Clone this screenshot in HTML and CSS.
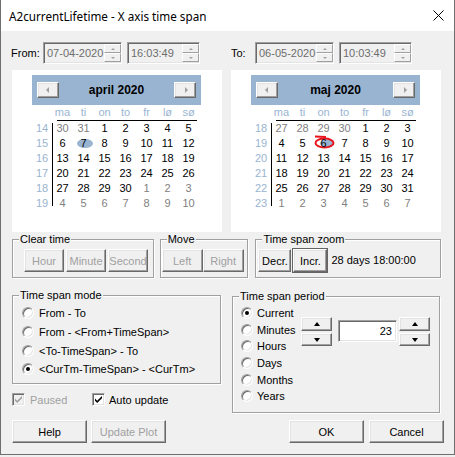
FILE: index.html
```html
<!DOCTYPE html>
<html>
<head>
<meta charset="utf-8">
<title>A2currentLifetime - X axis time span</title>
<link rel="stylesheet" href="styles.css">
</head>
<body>
<div class="window">
  <div class="titlebar">
    <span class="title">A2currentLifetime - X axis time span</span>
    <svg class="close" width="11" height="11" viewBox="0 0 11 11"><path d="M0.5 0.5 L10.5 10.5 M10.5 0.5 L0.5 10.5" stroke="#000" stroke-width="1" fill="none"/></svg>
  </div>
  <div class="content">
    <div class="pair fields">
      <div class="frow">
        <span class="flbl from">From:</span>
        <div class="spinedit date"><span class="val">07-04-2020</span><span class="spin"><span class="sb"><i class="cu"></i></span><span class="sb"><i class="cd"></i></span></span></div>
        <div class="spinedit time"><span class="val">16:03:49</span><span class="spin"><span class="sb"><i class="cu"></i></span><span class="sb"><i class="cd"></i></span></span></div>
      </div>
      <div class="frow">
        <span class="flbl to">To:</span>
        <div class="spinedit date"><span class="val">06-05-2020</span><span class="spin"><span class="sb"><i class="cu"></i></span><span class="sb"><i class="cd"></i></span></span></div>
        <div class="spinedit time"><span class="val">10:03:49</span><span class="spin"><span class="sb"><i class="cu"></i></span><span class="sb"><i class="cd"></i></span></span></div>
      </div>
    </div>

    <div class="pair cals">
      <div class="cal">
        <div class="cal-head">
          <span class="nav"><i class="tl"></i></span>
          <span class="cal-title">april 2020</span>
          <span class="nav"><i class="tr"></i></span>
        </div>
        <div class="dow"><span></span><span>ma</span><span>ti</span><span>on</span><span>to</span><span>fr</span><span>lø</span><span>sø</span></div>
        <div class="dow-line"></div>
        <div class="cal-body">
          <div class="weeks"><span>14</span><span>15</span><span>16</span><span>17</span><span>18</span><span>19</span></div>
          <div class="days">
            <span class="o">30</span><span class="o">31</span><span>1</span><span>2</span><span>3</span><span>4</span><span>5</span>
            <span>6</span><span class="sel"><b>7</b></span><span>8</span><span>9</span><span>10</span><span>11</span><span>12</span>
            <span>13</span><span>14</span><span>15</span><span>16</span><span>17</span><span>18</span><span>19</span>
            <span>20</span><span>21</span><span>22</span><span>23</span><span>24</span><span>25</span><span>26</span>
            <span>27</span><span>28</span><span>29</span><span>30</span><span class="o">1</span><span class="o">2</span><span class="o">3</span>
            <span class="o">4</span><span class="o">5</span><span class="o">6</span><span class="o">7</span><span class="o">8</span><span class="o">9</span><span class="o">10</span>
          </div>
        </div>
      </div>
      <div class="cal">
        <div class="cal-head">
          <span class="nav"><i class="tl"></i></span>
          <span class="cal-title">maj 2020</span>
          <span class="nav"><i class="tr"></i></span>
        </div>
        <div class="dow"><span></span><span>ma</span><span>ti</span><span>on</span><span>to</span><span>fr</span><span>lø</span><span>sø</span></div>
        <div class="dow-line"></div>
        <div class="cal-body">
          <div class="weeks"><span>18</span><span>19</span><span>20</span><span>21</span><span>22</span><span>23</span></div>
          <div class="days">
            <span class="o">27</span><span class="o">28</span><span class="o">29</span><span class="o">30</span><span>1</span><span>2</span><span>3</span>
            <span>4</span><span>5</span><span class="today"><svg class="ring" width="26" height="18" viewBox="0 0 26 18"><ellipse cx="14" cy="9.5" rx="7" ry="4" fill="#99b4d1"/><ellipse cx="11.5" cy="9" rx="9" ry="4.5" fill="none" stroke="#e8141c" stroke-width="2"/><path d="M2 2.6 L13 2.9" stroke="#e8141c" stroke-width="2" fill="none"/></svg><b>6</b></span><span>7</span><span>8</span><span>9</span><span>10</span>
            <span>11</span><span>12</span><span>13</span><span>14</span><span>15</span><span>16</span><span>17</span>
            <span>18</span><span>19</span><span>20</span><span>21</span><span>22</span><span>23</span><span>24</span>
            <span>25</span><span>26</span><span>27</span><span>28</span><span>29</span><span>30</span><span>31</span>
            <span class="o">1</span><span class="o">2</span><span class="o">3</span><span class="o">4</span><span class="o">5</span><span class="o">6</span><span class="o">7</span>
          </div>
        </div>
      </div>
    </div>

    <div class="grow">
      <div class="group g-clear">
        <span class="glabel">Clear time</span>
        <span class="btn dis w40">Hour</span>
        <span class="btn dis w40">Minute</span>
        <span class="btn dis w40">Second</span>
      </div>
      <div class="group g-move">
        <span class="glabel">Move</span>
        <span class="btn dis w41">Left</span>
        <span class="btn dis w41">Right</span>
      </div>
      <div class="group g-zoom">
        <span class="glabel">Time span zoom</span>
        <span class="btn w33">Decr.</span>
        <span class="btn w34 def">Incr.</span>
        <span class="zoomtxt">28 days 18:00:00</span>
      </div>
    </div>

    <div class="bottom">
      <div class="leftcol">
        <div class="group g-mode">
          <span class="glabel">Time span mode</span>
          <div class="rrow"><span class="radio"></span><span>From - To</span></div>
          <div class="rrow"><span class="radio"></span><span>From - &lt;From+TimeSpan&gt;</span></div>
          <div class="rrow"><span class="radio"></span><span>&lt;To-TimeSpan&gt; - To</span></div>
          <div class="rrow"><span class="radio on"></span><span>&lt;CurTm-TimeSpan&gt; - &lt;CurTm&gt;</span></div>
        </div>
        <div class="checks">
          <div class="ckitem paused">
            <span class="chk dis"><svg width="11" height="11" viewBox="0 0 11 11"><path d="M2 4.5 L4.2 6.7 L9 1.9 L9 4.2 L4.2 9 L2 6.8 Z" fill="#a0a0a0"/></svg></span>
            <span class="chklbl dis">Paused</span>
          </div>
          <div class="ckitem">
            <span class="chk"><svg width="11" height="11" viewBox="0 0 11 11"><path d="M2 4.5 L4.2 6.7 L9 1.9 L9 4.2 L4.2 9 L2 6.8 Z" fill="#000"/></svg></span>
            <span class="chklbl auto">Auto update</span>
          </div>
        </div>
      </div>
      <div class="group g-period">
        <span class="glabel">Time span period</span>
        <div class="pradios">
          <div class="prow"><span class="radio on"></span><span>Current</span></div>
          <div class="prow"><span class="radio"></span><span>Minutes</span></div>
          <div class="prow"><span class="radio"></span><span>Hours</span></div>
          <div class="prow"><span class="radio"></span><span>Days</span></div>
          <div class="prow"><span class="radio"></span><span>Months</span></div>
          <div class="prow"><span class="radio"></span><span>Years</span></div>
        </div>
        <div class="pctrls">
          <div class="updn"><span class="btn ub"><i class="au"></i></span><span class="btn db"><i class="ad"></i></span></div>
          <div class="edit">23</div>
          <div class="updn"><span class="btn ub"><i class="au"></i></span><span class="btn db"><i class="ad"></i></span></div>
        </div>
      </div>
    </div>

    <div class="btnrow">
      <span class="btn w75">Help</span>
      <span class="btn dis w75 ml4">Update Plot</span>
      <span class="btn w75 push">OK</span>
      <span class="btn w75 ml5">Cancel</span>
    </div>
  </div>
</div>
</body>
</html>
```
FILE: styles.css
```css
* { box-sizing: border-box; }
html, body { margin: 0; padding: 0; }
body {
  width: 455px;
  height: 457px;
  overflow: hidden;
  background: #f0f0f0;
  font-family: "Liberation Sans", Arial, sans-serif;
  font-size: 11px;
  color: #000;
}
.window {
  width: 455px;
  height: 455px;
  border: 1px solid #6f6f6f;
  border-top: 0;
  background: #f0f0f0;
}
.titlebar {
  height: 31px;
  background: #fff;
  display: flex;
  align-items: center;
  justify-content: space-between;
  padding: 0 10px 0 8px;
}
.title {
  font-family: "Noto Sans", "Liberation Sans", sans-serif;
  font-size: 11.7px;
  color: #000;
}
.close { display: block; }
.content { padding: 11px 13px 0 11px; }

.pair {
  display: grid;
  grid-template-columns: 210px 210px;
  column-gap: 9px;
}
.fields { height: 22px; }
.frow { display: flex; align-items: center; }
.flbl { display: block; }
.flbl.from { width: 32px; margin-left: -1px; }
.flbl.to { width: 24px; }

.spinedit {
  height: 22px;
  display: flex;
  align-items: center;
  border: 1px solid;
  border-color: #a0a0a0 #fff #fff #a0a0a0;
  box-shadow: inset 1px 1px #696969, inset -1px -1px #e3e3e3;
  background: #f0f0f0;
  color: #6d6d6d;
  padding: 1px 0 1px 3px;
}
.spinedit.date { width: 79px; }
.spinedit.time { width: 73px; margin-left: 5px; }
.spinedit .val { flex: 1; }
.spin {
  width: 17px;
  height: 18px;
  display: flex;
  flex-direction: column;
}
.sb {
  flex: 1;
  display: flex;
  align-items: center;
  justify-content: center;
  border: 1px solid;
  border-color: #fff #a0a0a0 #a0a0a0 #fff;
  background: #f0f0f0;
}
.cu, .cd { display: block; width: 0; height: 0; border-left: 2.5px solid transparent; border-right: 2.5px solid transparent; }
.cu { border-bottom: 2px solid #a0a0a0; }
.cd { border-top: 2px solid #a0a0a0; }

/* calendars */
.cals { margin-top: 6px; }
.cal {
  background: #fff;
  height: 162px;
  padding: 5px 0 0 20px;
}
.cal-head {
  width: 169px;
  height: 30px;
  background: #99b4d1;
  display: flex;
  align-items: center;
  justify-content: space-between;
  padding: 0 5px;
}
.nav {
  width: 22px;
  height: 16px;
  display: flex;
  align-items: center;
  justify-content: center;
  background: #f0f0f0;
  border: 1px solid;
  border-color: #fff #696969 #696969 #fff;
  box-shadow: inset -1px -1px #a0a0a0, inset 1px 1px #e3e3e3;
}
.tl, .tr { display: block; width: 0; height: 0; border-top: 3.5px solid transparent; border-bottom: 3.5px solid transparent; }
.tl { border-right: 3.5px solid #a0a0a0; margin-right: 2px; }
.tr { border-left: 3.5px solid #a0a0a0; margin-left: 2px; }
.cal-title { font-weight: bold; font-size: 12px; color: #000; }
.dow {
  display: grid;
  grid-template-columns: 20px repeat(7, 21px);
  height: 15px;
  line-height: 15px;
  text-align: center;
  color: #99b4d1;
}
.dow-line {
  margin-left: 25px;
  width: 140px;
  height: 1px;
  background: #000;
}
.cal-body { display: flex; }
.weeks {
  width: 20px;
  position: relative;
  display: grid;
  grid-auto-rows: 15px;
  line-height: 15px;
  text-align: center;
  color: #99b4d1;
}
.weeks::after {
  content: "";
  position: absolute;
  right: -1px;
  top: 2px;
  bottom: 5px;
  width: 1px;
  background: #000;
}
.days {
  display: grid;
  grid-template-columns: repeat(7, 21px);
  grid-auto-rows: 15px;
  line-height: 15px;
  text-align: center;
}
.days .o { color: #808080; }
.days b { font-weight: normal; position: relative; }
.sel, .today { position: relative; }
.sel::before {
  content: "";
  position: absolute;
  left: 4px;
  top: 3px;
  width: 16px;
  height: 9px;
  border-radius: 50%;
  background: #99b4d1;
}
.ring { position: absolute; left: 0; top: -2px; }

/* groups */
.group {
  position: relative;
  border: 1px solid #a0a0a0;
  box-shadow: inset 1px 1px #fff, 1px 1px #fff;
}
.glabel {
  position: absolute;
  top: -7px;
  left: 6px;
  padding: 0 1px;
  line-height: 13px;
  background: #f0f0f0;
}
.grow { display: flex; margin-top: 7px; height: 39px; }
.g-clear { width: 142px; display: flex; gap: 2px; padding: 9px 0 0 11px; }
.g-move { width: 89px; margin-left: 6px; display: flex; padding: 9px 0 0 1px; }
.g-zoom { width: 186px; margin-left: 7px; display: flex; align-items: flex-start; padding: 9px 0 0 2px; }
.zoomtxt { margin-left: 4px; line-height: 23px; }

.btn {
  height: 23px;
  display: flex;
  align-items: center;
  justify-content: center;
  background: #f0f0f0;
  border: 1px solid;
  border-color: #fff #696969 #696969 #fff;
  box-shadow: inset -1px -1px #a0a0a0, inset 1px 1px #e3e3e3;
  color: #000;
}
.btn.dis { color: #a0a0a0; }
.btn.def { outline: 1px solid #646464; }
.w33 { width: 33px; }
.w34 { width: 34px; margin-left: 2px; }
.w40 { width: 40px; }
.w41 { width: 41px; }
.w75 { width: 75px; }
.ml4 { margin-left: 4px; }
.ml5 { margin-left: 5px; }
.push { margin-left: auto; }

.bottom {
  display: grid;
  grid-template-columns: 209px 208px;
  column-gap: 11px;
  align-items: start;
  margin-top: 17px;
}
.g-mode { height: 89px; padding: 8px 0 0 9px; }
.rrow { height: 18.7px; display: flex; align-items: center; gap: 5px; }
.radio {
  width: 12px;
  height: 12px;
  border-radius: 50%;
  border: 1px solid;
  border-color: #a0a0a0 #fff #fff #a0a0a0;
  box-shadow: inset 1px 1px #696969, inset -1px -1px #e3e3e3;
  background: #fff;
  display: flex;
  align-items: center;
  justify-content: center;
  flex: none;
}
.radio.on::after {
  content: "";
  width: 4px;
  height: 4px;
  border-radius: 50%;
  background: #000;
}
.checks { display: flex; align-items: center; margin-top: 9px; height: 13px; }
.ckitem { display: flex; align-items: center; }
.ckitem.paused { width: 80px; }
.chk {
  width: 13px;
  height: 13px;
  border: 1px solid;
  border-color: #a0a0a0 #fff #fff #a0a0a0;
  box-shadow: inset 1px 1px #696969, inset -1px -1px #e3e3e3;
  background: #fff;
  flex: none;
}
.chk svg { display: block; }
.chk.dis { background: #f0f0f0; }
.chklbl { margin-left: 5px; }
.chklbl.auto { margin-left: 4px; }
.chklbl.dis { color: #a0a0a0; }

.g-period {
  margin-top: 1px;
  height: 117px;
  display: flex;
  align-items: flex-start;
  padding: 8px 0 0 8px;
}
.pradios { width: 60px; }
.prow { height: 16.6px; display: flex; align-items: center; gap: 4px; }
.pctrls { display: flex; align-items: flex-start; margin-top: 12px; }
.updn { display: flex; flex-direction: column; gap: 2px; width: 31px; }
.updn .ub { height: 14px; }
.updn .db { height: 13px; }
.au, .ad { display: block; width: 0; height: 0; border-left: 3.5px solid transparent; border-right: 3.5px solid transparent; }
.au { border-bottom: 4px solid #000; }
.ad { border-top: 4px solid #000; }
.edit {
  width: 59px;
  height: 22px;
  margin: 3px 2px 0 6px;
  background: #fff;
  border: 1px solid;
  border-color: #a0a0a0 #fff #fff #a0a0a0;
  box-shadow: inset 1px 1px #696969, inset -1px -1px #e3e3e3;
  text-align: right;
  padding: 0 4px 0 0;
  line-height: 20px;
}

.btnrow { display: flex; margin-top: 7px; margin-right: -3px; }
```
